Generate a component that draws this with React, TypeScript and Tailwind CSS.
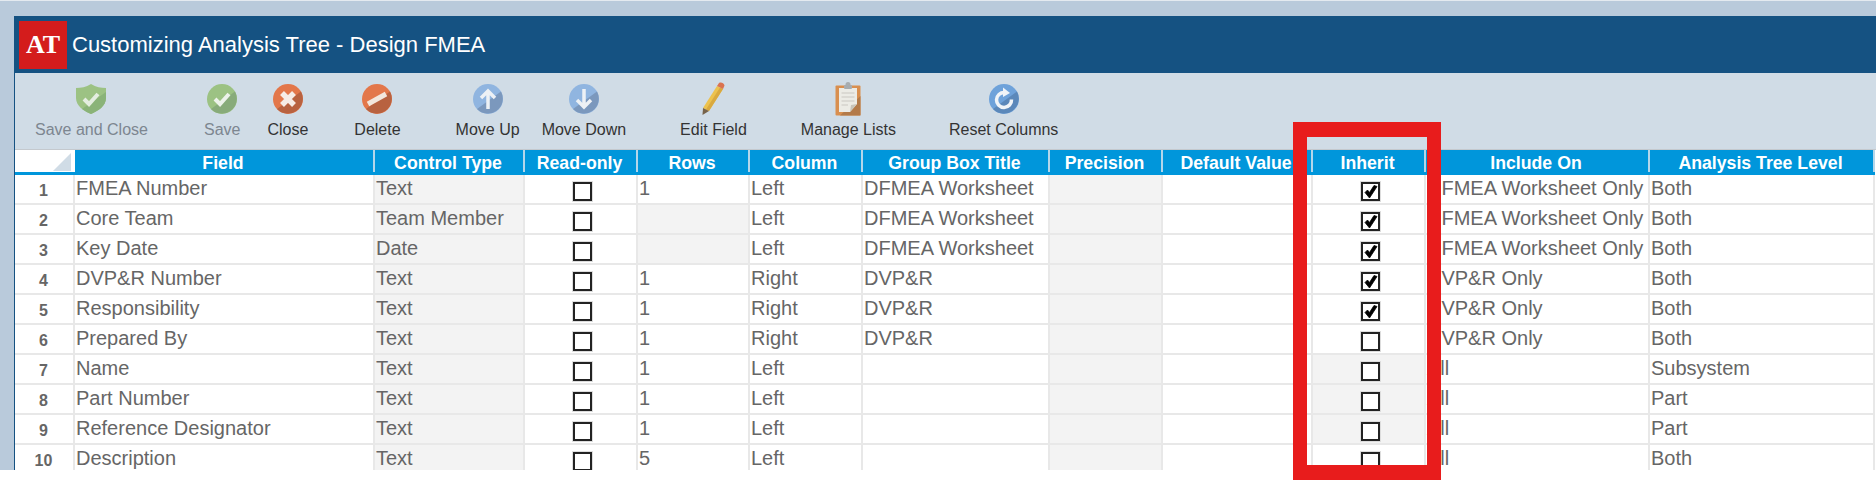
const SPLIT = "M4 25 L28 7.5 A15 15 0 0 1 4 25Z";

const CircleBase = ({ light, dark, children }: { light: string; dark: string; children: React.ReactNode }) => (
  <svg width="30" height="30" viewBox="0 0 30 30">
    <circle cx="15" cy="15" r="15" fill={light} />
    <path d={SPLIT} fill={dark} />
    {children}
  </svg>
);

const ShieldIcon = () => (
  <svg width="30" height="30" viewBox="0 0 30 30">
    <path d="M15 0 C20 3 25 4 30 4 L30 14 C30 22 22 27 15 30 C8 27 0 22 0 14 L0 4 C5 4 10 3 15 0Z" fill="#9cc283" />
    <path d="M30 8 L30 14 C30 22 22 27 15 30 C12 29 9 27 6 25Z" fill="#8ab378" />
    <path d="M8 15 L13 20 L22 10" fill="none" stroke="#e4ede0" strokeWidth="4" />
  </svg>
);

const SaveIcon = () => (
  <CircleBase light="#9cc283" dark="#88ab7a">
    <path d="M8 15 L13 20 L22 10" fill="none" stroke="#edf2ea" strokeWidth="4" />
  </CircleBase>
);

const CloseIcon = () => (
  <CircleBase light="#e3774a" dark="#b86240">
    <path d="M9 9 L21 21 M21 9 L9 21" stroke="#f6ece6" strokeWidth="5.5" />
  </CircleBase>
);

const DeleteIcon = () => (
  <CircleBase light="#e3774a" dark="#b86240">
    <path d="M6 20 L24 10" stroke="#f2e6dc" strokeWidth="5" />
  </CircleBase>
);

const UpIcon = () => (
  <CircleBase light="#90b5e0" dark="#7b98bd">
    <path d="M15 25 L15 8 M8 14 L15 7 L22 14" fill="none" stroke="#edf1f5" strokeWidth="3.5" />
  </CircleBase>
);

const DownIcon = () => (
  <CircleBase light="#90b5e0" dark="#7b98bd">
    <path d="M15 5 L15 22 M8 16 L15 23 L22 16" fill="none" stroke="#edf1f5" strokeWidth="3.5" />
  </CircleBase>
);

const PencilIcon = () => (
  <svg width="24" height="34" viewBox="0 0 24 34">
    <path d="M16 4 L22 7 L8 29 L2 26Z" fill="#ecc24e" />
    <path d="M19 5.5 L22 7 L8 29 L5 27.5Z" fill="#d9a93f" />
    <path d="M2 26 L8 29 L1.5 33Z" fill="#77634a" />
    <path d="M16 4 L18 1 C20 0 23 1 23.5 3.5 L22 7Z" fill="#da7350" />
  </svg>
);

const ClipboardIcon = () => (
  <svg width="26" height="34" viewBox="0 0 26 34">
    <rect x="0.5" y="3.5" width="25" height="30" rx="1" fill="#d98f4f" />
    <path d="M25.5 14 L25.5 33.5 L5 33.5Z" fill="#b37a49" />
    <path d="M4 6 L22 6 L22 22 L15 30 L4 30Z" fill="#ecebe5" />
    <path d="M15 30 L16 23 L22 22Z" fill="#c7c4ba" />
    <path d="M6.5 11 H19.5 M6.5 15 H19.5 M6.5 19 H19.5 M6.5 23 H13" stroke="#c9c8c2" strokeWidth="1.2" />
    <rect x="9" y="3" width="8" height="4" rx="1" fill="#a7acaf" />
    <circle cx="13" cy="2.5" r="2.5" fill="#a7acaf" />
  </svg>
);

const ResetIcon = () => (
  <svg width="30" height="30" viewBox="0 0 30 30">
    <circle cx="15" cy="15" r="15" fill="#6ea2da" />
    <path d="M4 25 L28 7.5 A15 15 0 0 1 4 25Z" fill="#5b88ba" />
    <path d="M15.5 8.5 A7.5 7.5 0 1 0 22.5 15.5" fill="none" stroke="#f0f4f8" strokeWidth="3.5" />
    <path d="M14 3.5 L21 9 L14 13Z" fill="#f0f4f8" />
  </svg>
);

const tools = [
  { label: "Save and Close", icon: <ShieldIcon />, off: true, cls: "ml-[20px]" },
  { label: "Save", icon: <SaveIcon />, off: true, cls: "ml-[56px]" },
  { label: "Close", icon: <CloseIcon />, off: false, cls: "ml-[27px]" },
  { label: "Delete", icon: <DeleteIcon />, off: false, cls: "ml-[46px]" },
  { label: "Move Up", icon: <UpIcon />, off: false, cls: "ml-[55px]" },
  { label: "Move Down", icon: <DownIcon />, off: false, cls: "ml-[22px]" },
  { label: "Edit Field", icon: <PencilIcon />, off: false, cls: "ml-[54px]" },
  { label: "Manage Lists", icon: <ClipboardIcon />, off: false, cls: "ml-[54px]" },
  { label: "Reset Columns", icon: <ResetIcon />, off: false, cls: "ml-[53px]" },
];

const colWidths = [60, 300, 150, 113, 112, 113, 187, 113, 150, 113, 224, 225];

const headers = ["Field", "Control Type", "Read-only", "Rows", "Column", "Group Box Title", "Precision", "Default Value", "Inherit", "Include On", "Analysis Tree Level"];

type Row = {
  field: string;
  type: string;
  rows: string | null;
  column: string;
  group: string;
  inherit: boolean;
  inheritGray: boolean;
  include: string;
  level: string;
};

const data: Row[] = [
  { field: "FMEA Number", type: "Text", rows: "1", column: "Left", group: "DFMEA Worksheet", inherit: true, inheritGray: false, include: "DFMEA Worksheet Only", level: "Both" },
  { field: "Core Team", type: "Team Member", rows: null, column: "Left", group: "DFMEA Worksheet", inherit: true, inheritGray: false, include: "DFMEA Worksheet Only", level: "Both" },
  { field: "Key Date", type: "Date", rows: null, column: "Left", group: "DFMEA Worksheet", inherit: true, inheritGray: false, include: "DFMEA Worksheet Only", level: "Both" },
  { field: "DVP&R Number", type: "Text", rows: "1", column: "Right", group: "DVP&R", inherit: true, inheritGray: false, include: "DVP&R Only", level: "Both" },
  { field: "Responsibility", type: "Text", rows: "1", column: "Right", group: "DVP&R", inherit: true, inheritGray: false, include: "DVP&R Only", level: "Both" },
  { field: "Prepared By", type: "Text", rows: "1", column: "Right", group: "DVP&R", inherit: false, inheritGray: false, include: "DVP&R Only", level: "Both" },
  { field: "Name", type: "Text", rows: "1", column: "Left", group: "", inherit: false, inheritGray: true, include: "All", level: "Subsystem" },
  { field: "Part Number", type: "Text", rows: "1", column: "Left", group: "", inherit: false, inheritGray: true, include: "All", level: "Part" },
  { field: "Reference Designator", type: "Text", rows: "1", column: "Left", group: "", inherit: false, inheritGray: true, include: "All", level: "Part" },
  { field: "Description", type: "Text", rows: "5", column: "Left", group: "", inherit: false, inheritGray: false, include: "All", level: "Both" },
];

const Box = ({ checked }: { checked: boolean }) => (
  <div className="flex justify-center pl-[3px] pt-[7px]">
    <span className="flex h-[19px] w-[19px] items-center justify-center border-2 border-[#222222] bg-white shadow-[0_0_0_1px_#dddddd]">
      {checked && (
        <svg width="14" height="14" viewBox="0 0 14 14">
          <path d="M1 7.5 L5.5 13 L13 1.5 L10 0.5 L5.5 7.5 L3.5 5Z" fill="#000000" stroke="#000000" strokeWidth="0.8" />
        </svg>
      )}
    </span>
  </div>
);

const Cell = ({ gray, children }: { gray?: boolean; children?: React.ReactNode }) => (
  <td className={`h-[30px] overflow-visible whitespace-nowrap border-r-2 border-b-2 border-[#e8e8e8] p-0 pl-[1px] align-top text-[20px] leading-[26px] text-[#666666] ${gray ? "bg-[#f3f3f3]" : "bg-white"}`}>
    {children}
  </td>
);

const App = () => {
  return (
    <div className="relative h-[480px] w-[1876px] overflow-hidden bg-white font-['Liberation_Sans',Arial,sans-serif]">
      <div className="h-[470px] border-t border-[#e4eaf0] bg-[#b9cadb] pt-[15px] pl-[14px]">
        <div className="h-[454px] overflow-hidden border-l border-[#155282] bg-white">
          <div className="flex h-[57px] items-center bg-[#155282] pl-[4px]">
            <div className="flex h-[48px] w-[48px] items-center justify-center bg-[#d41c1c] font-['Liberation_Serif',serif] text-[26px] font-bold text-white">
              AT
            </div>
            <span className="ml-[5px] text-[22px] text-white">Customizing Analysis Tree - Design FMEA</span>
          </div>

          <div className="flex h-[77px] border-b border-[#c4c9ce] bg-[#d0dce6] pt-[9px]">
            {tools.map((t) => (
              <div key={t.label} className={`flex flex-col items-center ${t.cls}`}>
                <div className="flex h-[34px] items-center justify-center">{t.icon}</div>
                <span className={`mt-[4px] text-[16px] leading-[20px] ${t.off ? "text-[#7d8690]" : "text-[#333333]"}`}>{t.label}</span>
              </div>
            ))}
          </div>

          <table className="table-fixed border-separate border-spacing-0" style={{ width: 1860 }}>
            <colgroup>
              {colWidths.map((w, i) => (
                <col key={i} style={{ width: w }} />
              ))}
            </colgroup>
            <thead>
              <tr>
                <th className="h-[25px] border-b-[3px] border-[#0096db] bg-white p-0">
                  <div className="flex h-[22px] items-end justify-end pr-[4px] pb-[1px]">
                    <svg width="18" height="18" viewBox="0 0 18 18">
                      <path d="M18 0 L18 18 L0 18Z" fill="#d0dce6" />
                    </svg>
                  </div>
                </th>
                {headers.map((h) => (
                  <th key={h} className="h-[25px] border-b-[3px] border-[#0096db] bg-[#0096db] p-0">
                    <div className="h-[22px] whitespace-nowrap border-r-2 border-[#b4d6ea] pr-[2px] text-center text-[17.7px] font-bold leading-[26px] text-white">
                      {h}
                    </div>
                  </th>
                ))}
              </tr>
            </thead>
            <tbody>
              {data.map((r, i) => (
                <tr key={r.field}>
                  <td className="h-[30px] border-r-2 border-b-2 border-[#e8e8e8] bg-white p-0 pt-[4px] pr-[1px] align-top text-center text-[16px] font-bold leading-[24px] text-[#666666]">
                    {i + 1}
                  </td>
                  <Cell>{r.field}</Cell>
                  <Cell gray>{r.type}</Cell>
                  <Cell>
                    <Box checked={false} />
                  </Cell>
                  <Cell gray={r.rows === null}>{r.rows}</Cell>
                  <Cell>{r.column}</Cell>
                  <Cell>{r.group}</Cell>
                  <Cell gray />
                  <Cell />
                  <Cell gray={r.inheritGray}>
                    <Box checked={r.inherit} />
                  </Cell>
                  <Cell>{r.include}</Cell>
                  <Cell>{r.level}</Cell>
                </tr>
              ))}
            </tbody>
          </table>
        </div>
      </div>

      {/* red highlight drawn over the Inherit column */}
      <div className="absolute top-[122px] left-[1293px] h-[358px] w-[148px] border-t-[15px] border-r-[14px] border-b-[15px] border-l-[14px] border-[#e81c1c]" />
    </div>
  );
};

export default App;
